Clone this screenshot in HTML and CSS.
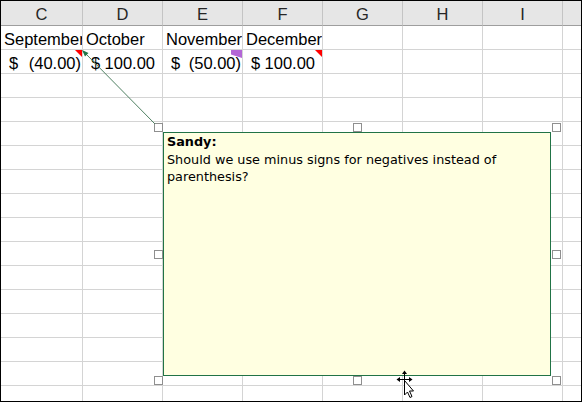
FILE: index.html
```html
<!DOCTYPE html>
<html>
<head>
<meta charset="utf-8">
<link rel="stylesheet" href="styles.css">
</head>
<body>
<div class="sheet">
  <div class="grid">
    <div class="c h">C</div><div class="c h">D</div><div class="c h">E</div><div class="c h">F</div><div class="c h">G</div><div class="c h">H</div><div class="c h">I</div><div class="c h"></div>

    <div class="c t">September</div><div class="c t">October</div><div class="c t">November</div><div class="c t">December</div><div class="c"></div><div class="c"></div><div class="c"></div><div class="c"></div>

    <div class="c acc neg note-red"><span>$</span><span>(40.00)</span></div>
    <div class="c acc pos"><span>$</span><span>100.00</span></div>
    <div class="c acc neg note-thread"><span>$</span><span>(50.00)</span></div>
    <div class="c acc pos note-red"><span>$</span><span>100.00</span></div>
    <div class="c"></div><div class="c"></div><div class="c"></div><div class="c"></div>

    <div class="c"></div><div class="c"></div><div class="c"></div><div class="c"></div><div class="c"></div><div class="c"></div><div class="c"></div><div class="c"></div>
    <div class="c"></div><div class="c"></div><div class="c"></div><div class="c"></div><div class="c"></div><div class="c"></div><div class="c"></div><div class="c"></div>
    <div class="c"></div><div class="c"></div><div class="c"></div><div class="c"></div><div class="c"></div><div class="c"></div><div class="c"></div><div class="c"></div>
    <div class="c"></div><div class="c"></div><div class="c"></div><div class="c"></div><div class="c"></div><div class="c"></div><div class="c"></div><div class="c"></div>
    <div class="c"></div><div class="c"></div><div class="c"></div><div class="c"></div><div class="c"></div><div class="c"></div><div class="c"></div><div class="c"></div>
    <div class="c"></div><div class="c"></div><div class="c"></div><div class="c"></div><div class="c"></div><div class="c"></div><div class="c"></div><div class="c"></div>
    <div class="c"></div><div class="c"></div><div class="c"></div><div class="c"></div><div class="c"></div><div class="c"></div><div class="c"></div><div class="c"></div>
    <div class="c"></div><div class="c"></div><div class="c"></div><div class="c"></div><div class="c"></div><div class="c"></div><div class="c"></div><div class="c"></div>
    <div class="c"></div><div class="c"></div><div class="c"></div><div class="c"></div><div class="c"></div><div class="c"></div><div class="c"></div><div class="c"></div>
    <div class="c"></div><div class="c"></div><div class="c"></div><div class="c"></div><div class="c"></div><div class="c"></div><div class="c"></div><div class="c"></div>
    <div class="c"></div><div class="c"></div><div class="c"></div><div class="c"></div><div class="c"></div><div class="c"></div><div class="c"></div><div class="c"></div>
    <div class="c"></div><div class="c"></div><div class="c"></div><div class="c"></div><div class="c"></div><div class="c"></div><div class="c"></div><div class="c"></div>
    <div class="c"></div><div class="c"></div><div class="c"></div><div class="c"></div><div class="c"></div><div class="c"></div><div class="c"></div><div class="c"></div>
    <div class="c"></div><div class="c"></div><div class="c"></div><div class="c"></div><div class="c"></div><div class="c"></div><div class="c"></div><div class="c"></div>
  </div>

  <div class="comment">
    <div class="author">Sandy:</div>
    <div class="body">Should we use minus signs for negatives instead of parenthesis?</div>
  </div>

  <span class="handle hl ht"></span>
  <span class="handle hm ht"></span>
  <span class="handle hr ht"></span>
  <span class="handle hl hv"></span>
  <span class="handle hr hv"></span>
  <span class="handle hl hb"></span>
  <span class="handle hm hb"></span>
  <span class="handle hr hb"></span>

  <svg class="overlay" width="582" height="402" viewBox="0 0 582 402">
    <line x1="85" y1="53" x2="155" y2="124" stroke="#4f8062" stroke-width="1"/>
    <polygon points="82,50 88.5,53 85,56.5" fill="#217346"/>
    <g stroke="#000" stroke-width="1" fill="none">
      <line x1="404.5" y1="373" x2="404.5" y2="381"/>
      <line x1="398" y1="379.5" x2="411" y2="379.5"/>
    </g>
    <polygon points="404.5,370.5 402,374 407,374" fill="#000"/>
    <polygon points="396.5,379.5 400,377 400,382" fill="#000"/>
    <polygon points="412.5,379.5 409,377 409,382" fill="#000"/>
    <polygon points="404.5,380.5 404.5,395 407.5,392 410,397.5 412,396.5 409.5,391 413.5,391" fill="#fff" stroke="#000" stroke-width="1" stroke-linejoin="miter"/>
  </svg>
</div>
</body>
</html>
```

FILE: styles.css
```css
html, body {
  margin: 0;
  padding: 0;
  background: #fff;
}

.sheet {
  position: relative;
  width: 582px;
  height: 402px;
  border: 1px solid #000;
  box-sizing: border-box;
  overflow: hidden;
  font-family: "Liberation Sans", Arial, sans-serif;
  font-size: 16.5px;
  color: #000;
}

.grid {
  display: grid;
  grid-template-columns: 82px repeat(6, 80px) 18px;
  grid-template-rows: 25px;
  grid-auto-rows: 24px;
  height: 400px;
  overflow: hidden;
}

.c {
  box-sizing: border-box;
  border-right: 1px solid #d4d4d4;
  border-bottom: 1px solid #d4d4d4;
  overflow: hidden;
  white-space: nowrap;
  padding-top: 2px;
  line-height: 22px;
}

.c:nth-child(8n) {
  border-right: none;
}

.h {
  background: #e6e6e6;
  border-right-color: #c4c4c4;
  border-bottom-color: #9e9e9e;
  text-align: center;
  color: #262626;
}

.t {
  padding-left: 3px;
}

.acc {
  position: relative;
  display: flex;
  justify-content: space-between;
  padding-left: 8px;
}

.acc.neg {
  padding-right: 1px;
}

.acc.pos {
  padding-right: 7px;
}

.note-red::after {
  content: "";
  position: absolute;
  top: 0;
  right: 0;
  width: 7px;
  height: 7px;
  background: #ff0000;
  clip-path: polygon(0 0, 100% 0, 100% 100%);
}

.note-thread::after {
  content: "";
  position: absolute;
  top: 0;
  right: 0;
  width: 11px;
  height: 8px;
  background: #b366d6;
  clip-path: polygon(0 0, 100% 0, 100% 100%, 0 55%);
}

.comment {
  position: absolute;
  left: 162px;
  top: 131px;
  width: 388px;
  height: 244px;
  box-sizing: border-box;
  border: 1px solid #217346;
  background: #ffffe1;
  padding: 0 4px 0 3px;
  font-family: "DejaVu Sans", Tahoma, sans-serif;
  font-size: 12.8px;
  line-height: 17.5px;
  color: #000;
}

.author {
  font-weight: bold;
}

.handle {
  position: absolute;
  width: 9px;
  height: 9px;
  box-sizing: border-box;
  border: 1px solid #8f8f8f;
  background: #fff;
}

.hl { left: 153px; }
.hm { left: 352px; }
.hr { left: 551px; }
.ht { top: 122px; }
.hv { top: 249px; }
.hb { top: 375px; }

.overlay {
  position: absolute;
  left: -1px;
  top: -1px;
  pointer-events: none;
}
```
